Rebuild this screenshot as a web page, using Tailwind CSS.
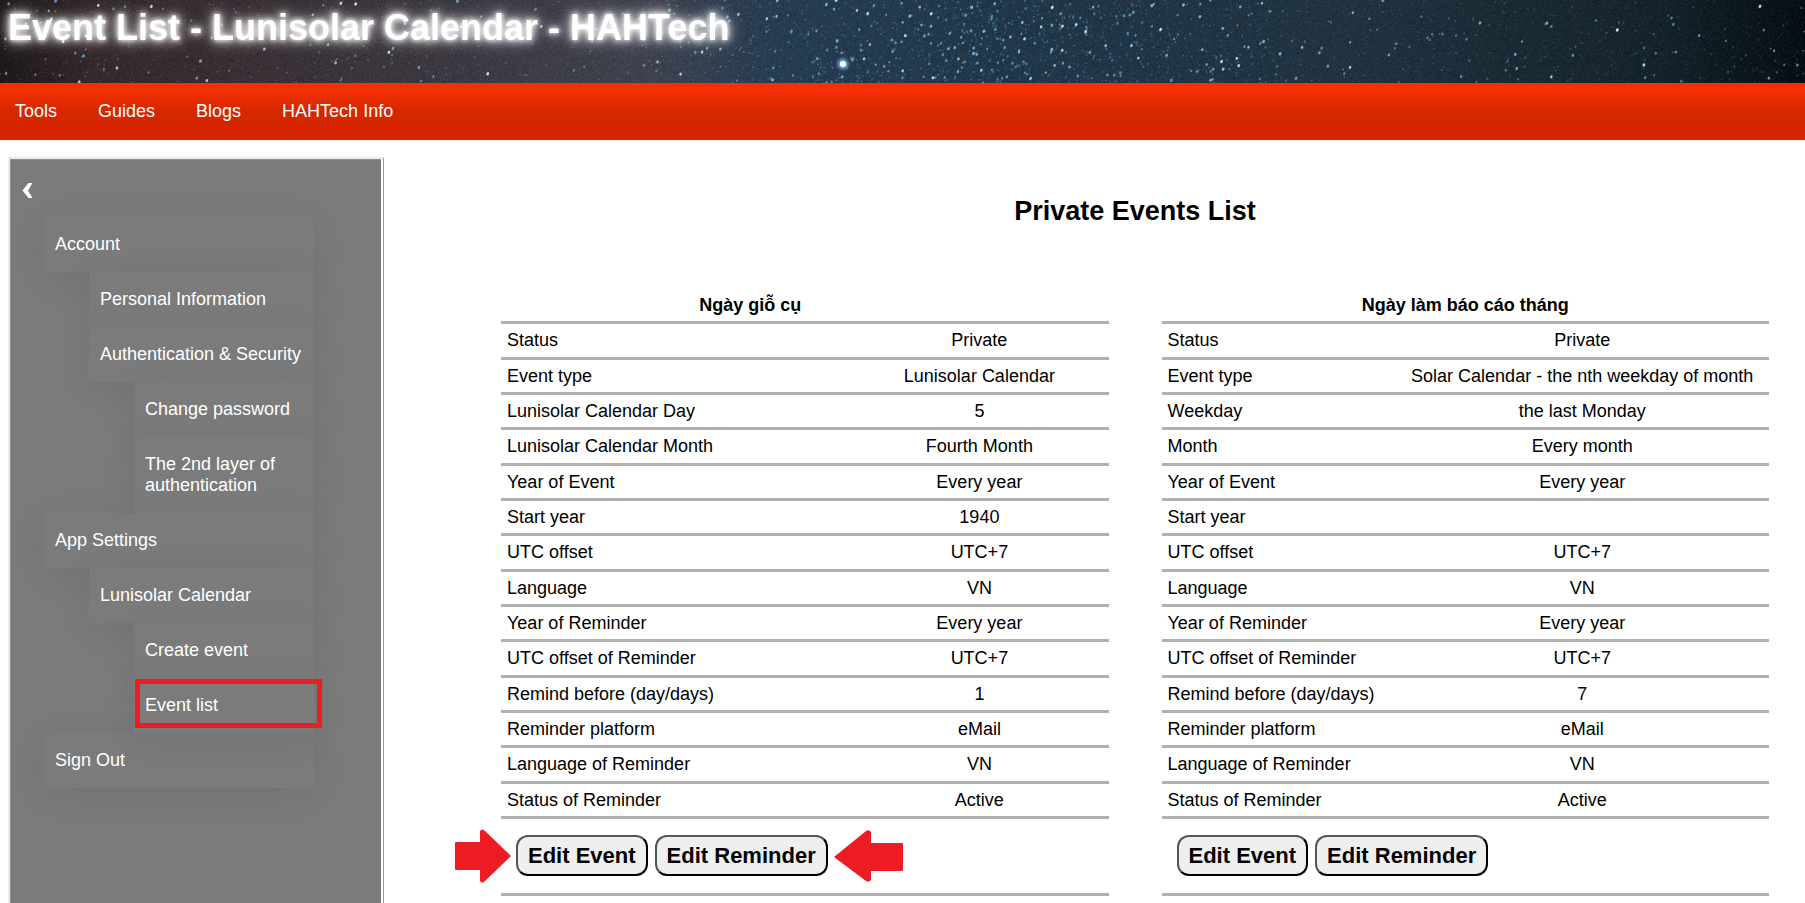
<!DOCTYPE html>
<html lang="en">

<head>
    <meta charset="UTF-8">
    <meta name="viewport" content="width=device-width, initial-scale=1.0">
    <title>Event List - Lunisolar Calendar - HAHTech</title>
    <script src="https://cdn.jsdelivr.net/npm/@tailwindcss/browser@4"></script>
</head>

<body class="h-screen overflow-hidden flex flex-col bg-white text-black text-[18px] leading-[21px] font-['Liberation_Sans',Arial,sans-serif]">
    <header class="relative h-[83px] shrink-0 bg-[#22323f]">
        <canvas id="sky" class="absolute inset-0 w-full h-full"></canvas>
        <h1 class="relative px-2 pt-[7px] text-[36px] leading-[41px] font-bold text-white whitespace-nowrap [text-shadow:0_0_5px_#fff,0_0_10px_#fff,0_0_15px_#ffffffb0,0_0_25px_#ffffff50]">Event List - Lunisolar Calendar - HAHTech</h1>
    </header>

    <nav class="h-[57px] shrink-0 flex items-center gap-[41px] px-[15px] text-white bg-linear-to-b from-[#f73003] from-10% via-[#d62700] via-50% to-[#d32500] border-b border-[#94402a]">
        <a href="#">Tools</a>
        <a href="#">Guides</a>
        <a href="#">Blogs</a>
        <a href="#">HAHTech Info</a>
    </nav>

    <div class="flex-1 flex min-h-0 pt-[17px] pl-2">
        <!-- Side menu -->
        <aside class="w-[376px] shrink-0 border-t-2 border-l-2 border-r-1 border-t-[#ebebeb] border-l-[#ebebeb] border-r-[#9b9b9b] pr-[2px]">
            <div class="h-full border-t border-l border-[#909090] bg-[#7b7b7b] text-white">
                <button type="button" aria-label="Close menu" class="block ml-[11px] pt-[22px]">
                    <svg width="11" height="17" viewBox="0 0 11 17" fill="#fff">
                        <path d="M6.500 1h4L6 8.500l4.500 7.500h-4L0.500 8.500z" />
                    </svg>
                </button>
                <ul class="mt-[18px] ml-[33px] w-[270px] [&_a]:block [&_a]:px-[11px] [&_a]:py-[17px] [&_a]:bg-[#7b7b7b] [&_a]:shadow-[0_6px_36px_rgba(0,0,0,0.08)]">
                    <li><a href="#">Account</a>
                        <ul class="ml-[45px]">
                            <li><a href="#">Personal Information</a></li>
                            <li><a href="#">Authentication &amp; Security</a>
                                <ul class="ml-[45px]">
                                    <li><a href="#">Change password</a></li>
                                    <li><a href="#">The 2nd layer of authentication</a></li>
                                </ul>
                            </li>
                        </ul>
                    </li>
                    <li><a href="#">App Settings</a>
                        <ul class="ml-[45px]">
                            <li><a href="#">Lunisolar Calendar</a>
                                <ul class="ml-[45px]">
                                    <li><a href="#">Create event</a></li>
                                    <li class="relative"><a href="#">Event list</a>
                                        <span class="absolute z-10 left-[1px] top-[1px] -right-2 h-[49px] border-5 border-[#ed1c24]"></span>
                                    </li>
                                </ul>
                            </li>
                        </ul>
                    </li>
                    <li><a href="#">Sign Out</a></li>
                </ul>
            </div>
        </aside>

        <!-- Events -->
        <main class="flex-1 pl-[117px] pr-9 pt-[38px]">
            <h2 class="text-[27px] leading-[32px] font-bold text-center">Private Events List</h2>
            <div class="grid grid-cols-2 gap-[53px] mt-[68px]">
                <section class="relative">
                    <table class="w-full border-collapse [&_tbody_tr]:border-y-3 [&_tbody_tr]:border-[#b0b0b0] [&_tbody_tr]:h-[35px] [&_tbody_tr:nth-child(3n+1)]:h-9 [&_th]:px-[6px] [&_td]:pl-2 [&_td]:pr-[5px] [&_td]:text-center [&_tbody_th]:font-normal [&_tbody_th]:text-left">
                        <caption class="pb-[5px] pr-[109px] font-bold">Ngày giỗ cụ</caption>
                        <tbody>
                            <tr><th scope="row" class="w-[57%]">Status</th><td>Private</td></tr>
                            <tr><th scope="row">Event type</th><td>Lunisolar Calendar</td></tr>
                            <tr><th scope="row">Lunisolar Calendar Day</th><td>5</td></tr>
                            <tr><th scope="row">Lunisolar Calendar Month</th><td>Fourth Month</td></tr>
                            <tr><th scope="row">Year of Event</th><td>Every year</td></tr>
                            <tr><th scope="row">Start year</th><td>1940</td></tr>
                            <tr><th scope="row">UTC offset</th><td>UTC+7</td></tr>
                            <tr><th scope="row">Language</th><td>VN</td></tr>
                            <tr><th scope="row">Year of Reminder</th><td>Every year</td></tr>
                            <tr><th scope="row">UTC offset of Reminder</th><td>UTC+7</td></tr>
                            <tr><th scope="row">Remind before (day/days)</th><td>1</td></tr>
                            <tr><th scope="row">Reminder platform</th><td>eMail</td></tr>
                            <tr><th scope="row">Language of Reminder</th><td>VN</td></tr>
                            <tr><th scope="row">Status of Reminder</th><td>Active</td></tr>
                        </tbody>
                    </table>
                    <div class="flex gap-[7px] px-[15px] pt-4 pb-[17px] border-b-3 border-[#b0b0b0]">
                        <button type="button" class="px-[10px] py-[6px] border-2 border-t-[#555] border-l-[#555] border-r-black border-b-black rounded-xl bg-[#efefef] text-[22px] leading-[25px] font-bold">Edit Event</button>
                        <button type="button" class="px-[10px] py-[6px] border-2 border-t-[#555] border-l-[#555] border-r-black border-b-black rounded-xl bg-[#efefef] text-[22px] leading-[25px] font-bold">Edit Reminder</button>
                    </div>
                    <svg class="absolute -left-[46px] bottom-[13px]" width="56" height="54" viewBox="0 0 56 54" fill="#ed1c24">
                        <path d="M1 13h24V2q2-3 5 0l26 25-26 25q-3 3-5 0V41H1q-1 0-1-1V14q0-1 1-1z" />
                    </svg>
                    <svg class="absolute left-[333px] bottom-[13px]" width="69" height="54" viewBox="0 0 69 54" fill="#ed1c24">
                        <path d="M68 14H37V3q-2-3-5-1L0 28l32 24q3 2 5-1V42h31q1 0 1-1V15q0-1-1-1z" />
                    </svg>
                </section>
                <section>
                    <table class="w-full border-collapse [&_tbody_tr]:border-y-3 [&_tbody_tr]:border-[#b0b0b0] [&_tbody_tr]:h-[35px] [&_tbody_tr:nth-child(3n+1)]:h-9 [&_th]:px-[6px] [&_td]:pl-2 [&_td]:pr-[5px] [&_td]:text-center [&_tbody_th]:font-normal [&_tbody_th]:text-left">
                        <caption class="pb-[5px] font-bold">Ngày làm báo cáo tháng</caption>
                        <tbody>
                            <tr><th scope="row" class="w-[38%]">Status</th><td>Private</td></tr>
                            <tr><th scope="row">Event type</th><td>Solar Calendar - the nth weekday of month</td></tr>
                            <tr><th scope="row">Weekday</th><td>the last Monday</td></tr>
                            <tr><th scope="row">Month</th><td>Every month</td></tr>
                            <tr><th scope="row">Year of Event</th><td>Every year</td></tr>
                            <tr><th scope="row">Start year</th><td></td></tr>
                            <tr><th scope="row">UTC offset</th><td>UTC+7</td></tr>
                            <tr><th scope="row">Language</th><td>VN</td></tr>
                            <tr><th scope="row">Year of Reminder</th><td>Every year</td></tr>
                            <tr><th scope="row">UTC offset of Reminder</th><td>UTC+7</td></tr>
                            <tr><th scope="row">Remind before (day/days)</th><td>7</td></tr>
                            <tr><th scope="row">Reminder platform</th><td>eMail</td></tr>
                            <tr><th scope="row">Language of Reminder</th><td>VN</td></tr>
                            <tr><th scope="row">Status of Reminder</th><td>Active</td></tr>
                        </tbody>
                    </table>
                    <div class="flex gap-[7px] px-[15px] pt-4 pb-[17px] border-b-3 border-[#b0b0b0]">
                        <button type="button" class="px-[10px] py-[6px] border-2 border-t-[#555] border-l-[#555] border-r-black border-b-black rounded-xl bg-[#efefef] text-[22px] leading-[25px] font-bold">Edit Event</button>
                        <button type="button" class="px-[10px] py-[6px] border-2 border-t-[#555] border-l-[#555] border-r-black border-b-black rounded-xl bg-[#efefef] text-[22px] leading-[25px] font-bold">Edit Reminder</button>
                    </div>
                </section>
            </div>
        </main>
    </div>

    <script>
        // night sky behind the page title
        function drawSky() {
            const sky = document.getElementById("sky");
            const w = sky.width = window.innerWidth;
            const h = sky.height = 83;
            const ctx = sky.getContext("2d");
            let seed = 7;
            function rand() {
                seed = (seed * 16807) % 2147483647;
                return seed / 2147483647;
            }

            const base = ctx.createLinearGradient(0, 0, w, 0);
            base.addColorStop(0, "#1e1718");
            base.addColorStop(0.05, "#35282b");
            base.addColorStop(0.2, "#3b343b");
            base.addColorStop(0.36, "#40424f");
            base.addColorStop(0.43, "#263c52");
            base.addColorStop(0.55, "#20374b");
            base.addColorStop(0.75, "#20323f");
            base.addColorStop(0.92, "#14222a");
            base.addColorStop(1, "#050d12");
            ctx.fillStyle = base;
            ctx.fillRect(0, 0, w, h);

            // grain
            for (let i = 0; i < w * h / 3; i++) {
                ctx.fillStyle = rand() > 0.5 ? "rgba(150,180,200,0.07)" : "rgba(0,0,0,0.12)";
                ctx.fillRect(Math.floor(rand() * w), Math.floor(rand() * h), 1, 1);
            }

            // stars, denser in the middle of the strip
            const colors = ["130,190,220", "90,150,200", "200,225,235", "110,175,185"];
            for (let i = 0; i < w * 0.9; i++) {
                const x = i % 2 ? rand() * w : w * (0.35 + (rand() + rand()) * 0.2);
                const bright = Math.pow(rand(), 4);
                ctx.fillStyle = `rgba(${colors[Math.floor(rand() * 4)]},${0.2 + bright * 0.8})`;
                ctx.beginPath();
                ctx.ellipse(x, rand() * h, 0.8 + bright * 0.6, 1 + bright * 0.8, 0.5, 0, 7);
                ctx.fill();
            }

            // brightest one
            const sx = w * 0.467, sy = 64;
            const glow = ctx.createRadialGradient(sx, sy, 1, sx, sy, 8);
            glow.addColorStop(0, "#fff");
            glow.addColorStop(0.3, "#7fc4ffcc");
            glow.addColorStop(1, "#3a80c000");
            ctx.fillStyle = glow;
            ctx.fillRect(sx - 8, sy - 8, 16, 16);
            ctx.fillStyle = "#fff";
            ctx.beginPath();
            ctx.arc(sx, sy, 3, 0, 7);
            ctx.fill();
        }

        drawSky();
        window.addEventListener("resize", drawSky);
    </script>
</body>

</html>
